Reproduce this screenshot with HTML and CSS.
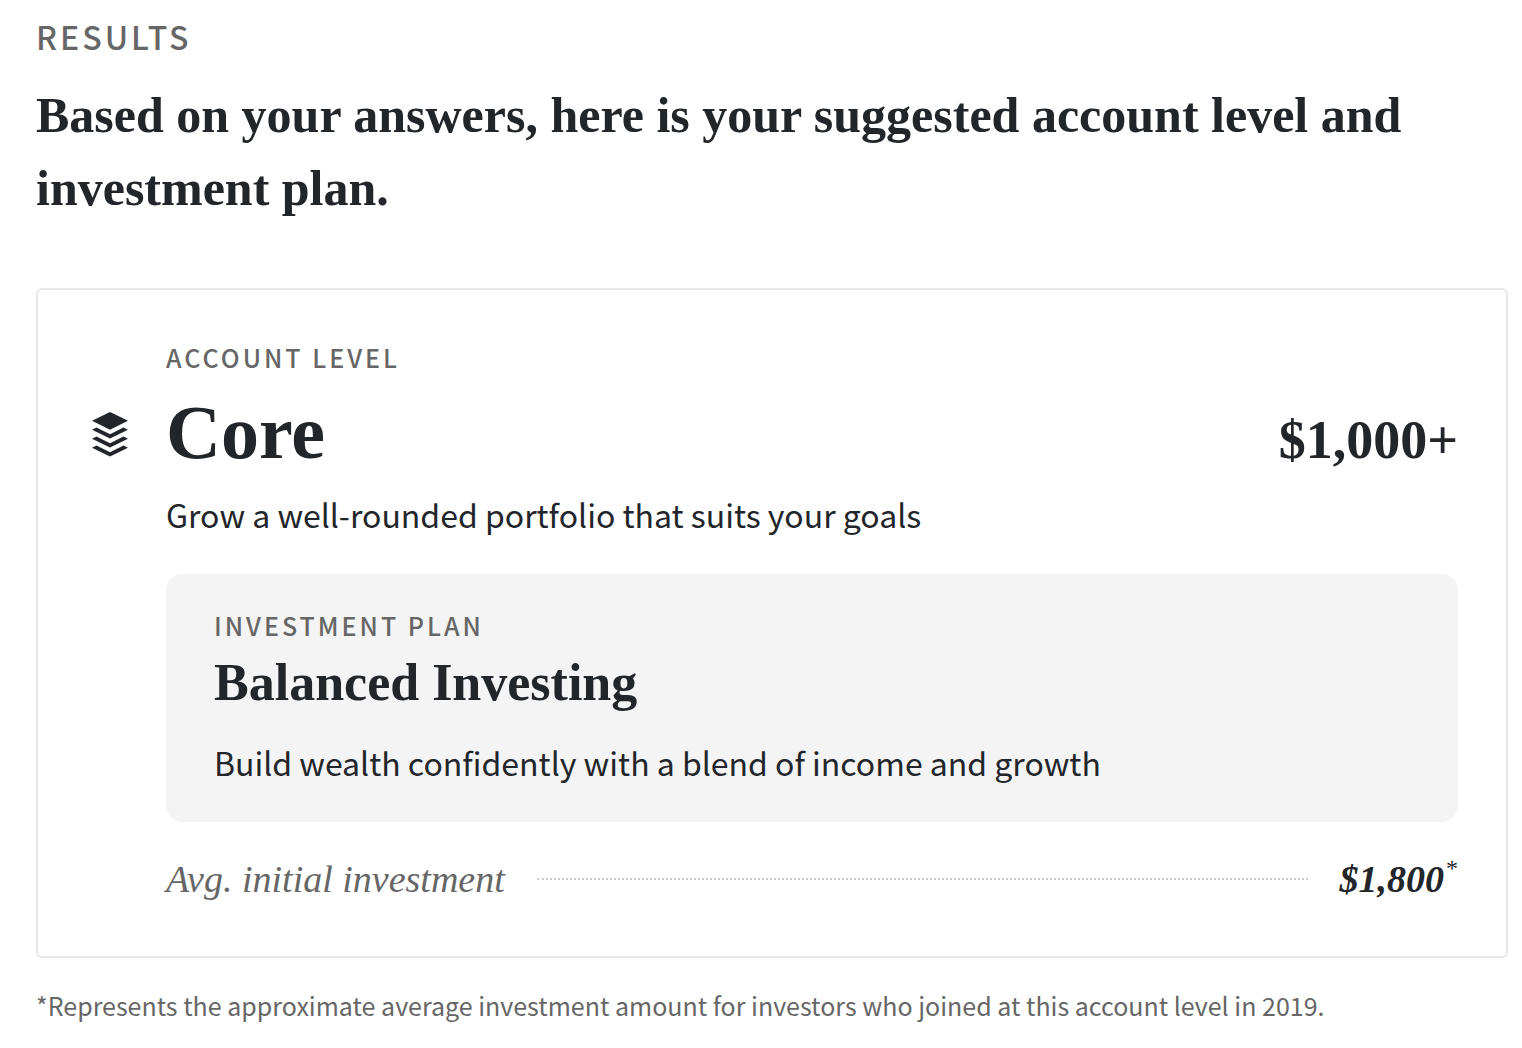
FILE: index.html
```html
<!DOCTYPE html>
<html lang="en">
<head>
<meta charset="utf-8">
<title>Results</title>
<link rel="stylesheet" href="styles.css">
</head>
<body>
<main class="results">
  <header class="intro">
    <p class="eyebrow eyebrow-large">RESULTS</p>
    <h1 class="headline">Based on your answers, here is your suggested account level and investment plan.</h1>
  </header>
  <section class="card">
    <p class="eyebrow card-body">ACCOUNT LEVEL</p>
    <svg class="level-icon" viewBox="0 0 36 45" aria-hidden="true">
      <path d="M18 0 36 8.8 18 17.7 0 8.8Z"/>
      <path d="M0 17.8 4.5 15.6 18 22.3 31.5 15.6 36 17.8 18 26.6Z"/>
      <path d="M0 26.8 4.5 24.6 18 31.3 31.5 24.6 36 26.8 18 35.6Z"/>
      <path d="M0 35.8 4.5 33.6 18 40.3 31.5 33.6 36 35.8 18 44.6Z"/>
    </svg>
    <div class="level">
      <h2 class="level-name">Core</h2>
      <p class="level-minimum">$1,000+</p>
    </div>
    <p class="description card-body">Grow a well-rounded portfolio that suits your goals</p>
    <section class="plan card-body">
      <p class="eyebrow">INVESTMENT PLAN</p>
      <h3 class="plan-name">Balanced Investing</h3>
      <p class="description">Build wealth confidently with a blend of income and growth</p>
    </section>
    <div class="average card-body">
      <span class="average-label">Avg. initial investment</span>
      <span class="leader"></span>
      <strong class="average-value">$1,800<sup class="mark">*</sup></strong>
    </div>
  </section>
  <p class="footnote">*Represents the approximate average investment amount for investors who joined at this account level in 2019.</p>
</main>
</body>
</html>
```
FILE: styles.css
```css
* {
  box-sizing: border-box;
}

body {
  margin: 0;
  background: #fff;
  color: #22252a;
  font-family: "Noto Sans CJK JP", "Noto Sans", sans-serif;
}

h1, h2, h3, p {
  margin: 0;
}

.results {
  padding: 12px 14px 20px 36px;
}

.eyebrow {
  color: #666;
  font-size: 25px;
  font-weight: 500;
  letter-spacing: 3px;
  line-height: 36px;
}

.eyebrow-large {
  font-size: 32px;
  line-height: 48px;
}

.headline {
  margin-top: 19px;
  font: 700 50px/73px "Liberation Serif", serif;
}

.card {
  display: grid;
  grid-template-columns: 36px 1fr;
  column-gap: 38px;
  margin-top: 63px;
  padding: 49px 48px 51px 54px;
  border: 2px solid #e8e8e8;
  border-radius: 6px;
}

.card-body {
  grid-column: 2;
}

.level-icon {
  align-self: center;
  width: 36px;
  height: 45px;
  margin-top: 4px;
  fill: #22252a;
}

.level {
  display: flex;
  align-items: baseline;
  justify-content: space-between;
  font-family: "Liberation Serif", serif;
}

.level-name {
  font-size: 76px;
  line-height: 115px;
}

.level-minimum {
  font-size: 54px;
  font-weight: 700;
}

.description {
  font-size: 32px;
  line-height: 48px;
}

.plan {
  margin-top: 36px;
  padding: 33px 48px 36px;
  border-radius: 16px;
  background: #f4f4f4;
}

.plan-name {
  margin-bottom: 15px;
  font: 700 52px/80px "Liberation Serif", serif;
}

.average {
  display: flex;
  align-items: center;
  gap: 32px;
  margin-top: 31px;
  font: italic 38px/52px "Liberation Serif", serif;
}

.average-label {
  color: #666;
}

.leader {
  flex: 1;
  border-top: 2px dotted #ccc;
}

.mark {
  margin-left: 2px;
  font-size: 24px;
  font-style: normal;
  font-weight: 400;
  line-height: 0;
  vertical-align: 16px;
}

.footnote {
  margin-top: 27px;
  color: #666;
  font-size: 25px;
  line-height: 40px;
}
```
